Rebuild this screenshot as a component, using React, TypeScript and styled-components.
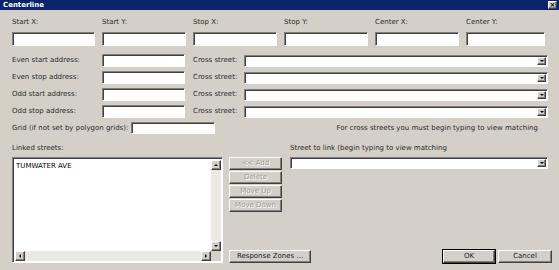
import React from 'react';
import styled, { createGlobalStyle, css } from 'styled-components';

const Global = createGlobalStyle`
  html, body { margin: 0; padding: 0; background: #d4d0c8; }
  body {
    width: 559px; height: 270px; overflow: hidden;
    font-family: "DejaVu Sans", Verdana, sans-serif; font-size: 7px; color: #2a2a2a;
  }
  * { box-sizing: border-box; }
`;

const raised = css`
  border-top: 1px solid #ffffff;
  border-left: 1px solid #ffffff;
  border-right: 1px solid #404040;
  border-bottom: 1px solid #404040;
  box-shadow: inset -1px -1px 0 #808080;
  background: #d4d0c8;
`;

const sunken = css`
  border-top: 1px solid #808080;
  border-left: 1px solid #808080;
  border-right: 1px solid #ffffff;
  border-bottom: 1px solid #ffffff;
  box-shadow: inset 1px 1px 0 #404040;
  background: #ffffff;
`;

const Window = styled.div`
  width: 559px; height: 270px; background: #d4d0c8;
  display: flex; flex-direction: column;
`;

const TitleBar = styled.div`
  height: 10px; background: #0a246a;
  display: flex; align-items: center; justify-content: space-between;
  padding: 0 2px 0 3px;
`;

const Title = styled.span`
  color: #fff; font-weight: bold; font-size: 7px; line-height: 10px;
`;

const CloseBtn = styled.div`
  ${raised};
  width: 9px; height: 8px;
  display: flex; align-items: center; justify-content: center;
  font-size: 7px; line-height: 1; font-weight: bold; color: #000;
`;

const Body = styled.div`
  flex: 1; display: flex; flex-direction: column;
  padding: 8px 7px 0 12px;
`;

const TopGrid = styled.div`
  display: grid;
  grid-template-columns: 83px 84px 84px 84px 84px 79px;
  column-gap: 7px;
`;

const Field = styled.div`
  display: flex; flex-direction: column; gap: 5px;
`;

const Label = styled.span<{ $indent?: number }>`
  line-height: 9px; white-space: nowrap;
  padding-left: ${p => p.$indent ?? 0}px;
`;

const TextBox = styled.div<{ $w?: number; $h?: number; $ml?: number }>`
  ${sunken};
  width: ${p => (p.$w ? `${p.$w}px` : '100%')};
  height: ${p => p.$h ?? 13}px;
  margin-left: ${p => p.$ml ?? 0}px;
`;

const AddrGrid = styled.div`
  display: grid;
  grid-template-columns: 90px 83px 59px 304px;
  row-gap: 4px;
  margin-top: 8px;
  align-items: center;
`;

const Combo = styled.div`
  ${sunken};
  width: 100%;
  height: 12px;
  display: flex; justify-content: flex-end; align-items: stretch;
  padding: 1px;
`;

const DropBtn = styled.div`
  ${raised};
  width: 9px;
  display: flex; align-items: center; justify-content: center;
`;

const ArrowDown = styled.span`
  width: 0; height: 0;
  border-left: 2px solid transparent; border-right: 2px solid transparent;
  border-top: 2px solid #000;
`;

const ArrowUp = styled.span`
  width: 0; height: 0;
  border-left: 2px solid transparent; border-right: 2px solid transparent;
  border-bottom: 2px solid #000;
`;

const ArrowLeft = styled.span`
  width: 0; height: 0;
  border-top: 2px solid transparent; border-bottom: 2px solid transparent;
  border-right: 2px solid #000;
`;

const ArrowRight = styled.span`
  width: 0; height: 0;
  border-top: 2px solid transparent; border-bottom: 2px solid transparent;
  border-left: 2px solid #000;
`;

const GridRow = styled.div`
  display: flex; align-items: center; margin-top: 4px;
`;

const Hint = styled.span`
  margin-left: auto; margin-right: 14px; line-height: 9px; white-space: nowrap;
`;

const Bottom = styled.div`
  display: flex; margin-top: 10px; gap: 6px;
`;

const LeftCol = styled.div`
  display: flex; flex-direction: column; gap: 4px; width: 211px;
`;

const ListBox = styled.div`
  ${sunken};
  width: 211px; height: 106px;
  display: grid;
  grid-template-columns: 1fr 10px;
  grid-template-rows: 1fr 10px;
  padding: 2px 1px 1px 2px;
`;

const ListItems = styled.div`
  padding: 2px 0 0 1px; line-height: 9px; color: #000;
`;

const VScroll = styled.div`
  background: #ebe9e4;
  display: flex; flex-direction: column; justify-content: space-between;
`;

const HScroll = styled.div`
  background: #ebe9e4;
  display: flex; justify-content: space-between;
`;

const SbBtn = styled.div`
  ${raised};
  width: 10px; height: 10px;
  display: flex; align-items: center; justify-content: center;
`;

const Corner = styled.div`
  background: #d4d0c8;
`;

const RightArea = styled.div`
  display: flex; flex-direction: column; width: 323px; height: 119px;
`;

const RightTop = styled.div`
  display: flex; gap: 8px;
`;

const BtnCol = styled.div`
  display: flex; flex-direction: column; gap: 1px; padding-top: 13px; width: 53px;
`;

const Btn = styled.div<{ $w: number; $disabled?: boolean; $default?: boolean; $ml?: number }>`
  ${raised};
  width: ${p => p.$w}px; height: 13px;
  margin-left: ${p => p.$ml ?? 0}px;
  display: flex; align-items: center; justify-content: center;
  white-space: nowrap; line-height: 1;
  color: ${p => (p.$disabled ? '#a09c94' : '#1a1a1a')};
  text-shadow: ${p => (p.$disabled ? '1px 1px 0 #fff' : 'none')};
  ${p => p.$default && css`
    outline: 1px solid #000;
    outline-offset: 0;
  `}
`;

const StreetCol = styled.div`
  display: flex; flex-direction: column; gap: 4px; width: 258px;
`;

const Footer = styled.div`
  margin-top: auto;
  display: flex; align-items: center;
`;

const Spacer = styled.div` flex: 1; `;

const addressRows = [
  'Even start address:',
  'Even stop address:',
  'Odd start address:',
  'Odd stop address:',
];

const topFields = ['Start X:', 'Start Y:', 'Stop X:', 'Stop Y:', 'Center X:', 'Center Y:'];

export default function App() {
  return (
    <Window>
      <Global />
      <TitleBar>
        <Title>Centerline</Title>
        <CloseBtn>×</CloseBtn>
      </TitleBar>
      <Body>
        <TopGrid>
          {topFields.map(f => (
            <Field key={f}>
              <Label>{f}</Label>
              <TextBox $h={14} />
            </Field>
          ))}
        </TopGrid>

        <AddrGrid>
          {addressRows.map(r => (
            <React.Fragment key={r}>
              <Label>{r}</Label>
              <TextBox />
              <Label $indent={8}>Cross street:</Label>
              <Combo>
                <DropBtn><ArrowDown /></DropBtn>
              </Combo>
            </React.Fragment>
          ))}
        </AddrGrid>

        <GridRow>
          <Label>Grid (if not set by polygon grids):</Label>
          <TextBox $w={84} $h={12} $ml={3} />
          <Hint>For cross streets you must begin typing to view matching</Hint>
        </GridRow>

        <Bottom>
          <LeftCol>
            <Label>Linked streets:</Label>
            <ListBox>
              <ListItems>TUMWATER AVE</ListItems>
              <VScroll>
                <SbBtn><ArrowUp /></SbBtn>
                <SbBtn><ArrowDown /></SbBtn>
              </VScroll>
              <HScroll>
                <SbBtn><ArrowLeft /></SbBtn>
                <SbBtn><ArrowRight /></SbBtn>
              </HScroll>
              <Corner />
            </ListBox>
          </LeftCol>
          <RightArea>
            <RightTop>
              <BtnCol>
                <Btn $w={53} $disabled>&lt;&lt; Add</Btn>
                <Btn $w={53} $disabled>Delete</Btn>
                <Btn $w={53} $disabled>Move Up</Btn>
                <Btn $w={53} $disabled>Move Down</Btn>
              </BtnCol>
              <StreetCol>
                <Label>Street to link (begin typing to view matching</Label>
                <Combo>
                  <DropBtn><ArrowDown /></DropBtn>
                </Combo>
              </StreetCol>
            </RightTop>
            <Footer>
              <Btn $w={82}>Response Zones ...</Btn>
              <Spacer />
              <Btn $w={52} $default>OK</Btn>
              <Btn $w={54} $ml={3}>Cancel</Btn>
            </Footer>
          </RightArea>
        </Bottom>
      </Body>
    </Window>
  );
}
